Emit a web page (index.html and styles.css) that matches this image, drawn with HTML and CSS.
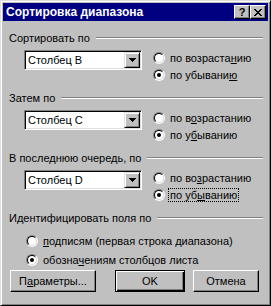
FILE: index.html
```html
<!DOCTYPE html>
<html lang="ru">
<head>
  <meta charset="UTF-8">
  <title>Сортировка диапазона</title>
  <link rel="stylesheet" href="styles.css">
</head>
<body>

  <div class="window">
    <!-- заголовок -->
    <div class="titlebar">
      <span class="title">Сортировка диапазона</span>
      <div class="title-buttons">
        <span class="tbtn">?</span>
        <span class="tbtn">
          <svg width="8" height="7" viewBox="0 0 8 7" shape-rendering="crispEdges"><path d="M0 0h2v1H0zM6 0h2v1H6zM1 1h2v1H1zM5 1h2v1H5zM2 2h4v1H2zM3 3h2v1H3zM2 4h4v1H2zM1 5h2v1H1zM5 5h2v1H5zM0 6h2v1H0zM6 6h2v1H6z" fill="#000"/></svg>
        </span>
      </div>
    </div>

    <div class="content">
      <div class="group">
        <div class="legend"><span>Сортировать по</span><i class="rule"></i></div>
        <div class="group-row">
          <div class="combo">
            <span class="combo-value">Столбец B</span>
            <span class="combo-btn"><svg width="7" height="4" viewBox="0 0 7 4" shape-rendering="crispEdges"><path d="M0 0h7v1H0zM1 1h5v1H1zM2 2h3v1H2zM3 3h1v1H3z" fill="#000"/></svg></span>
          </div>
          <div class="radios">
            <div class="radio"><span class="dot"></span><span>по возраста<u>н</u>ию</span></div>
            <div class="radio checked"><span class="dot"></span><span>по убывани<u>ю</u></span></div>
          </div>
        </div>
      </div>

      <div class="group">
        <div class="legend"><span>Затем по</span><i class="rule"></i></div>
        <div class="group-row">
          <div class="combo">
            <span class="combo-value">Столбец C</span>
            <span class="combo-btn"><svg width="7" height="4" viewBox="0 0 7 4" shape-rendering="crispEdges"><path d="M0 0h7v1H0zM1 1h5v1H1zM2 2h3v1H2zM3 3h1v1H3z" fill="#000"/></svg></span>
          </div>
          <div class="radios">
            <div class="radio"><span class="dot"></span><span>по в<u>о</u>зрастанию</span></div>
            <div class="radio checked"><span class="dot"></span><span>по у<u>б</u>ыванию</span></div>
          </div>
        </div>
      </div>

      <div class="group">
        <div class="legend"><span>В последнюю очередь, по</span><i class="rule"></i></div>
        <div class="group-row">
          <div class="combo">
            <span class="combo-value">Столбец D</span>
            <span class="combo-btn"><svg width="7" height="4" viewBox="0 0 7 4" shape-rendering="crispEdges"><path d="M0 0h7v1H0zM1 1h5v1H1zM2 2h3v1H2zM3 3h1v1H3z" fill="#000"/></svg></span>
          </div>
          <div class="radios">
            <div class="radio"><span class="dot"></span><span>по во<u>з</u>растанию</span></div>
            <div class="radio checked"><span class="dot"></span><span class="focus">по уб<u>ы</u>ванию</span></div>
          </div>
        </div>
      </div>

      <div class="group ident">
        <div class="legend"><span>Идентифицировать поля по</span><i class="rule"></i></div>
        <div class="ident-list">
          <div class="radio"><span class="dot"></span><span><u>п</u>одписям (первая строка диапазона)</span></div>
          <div class="radio checked"><span class="dot"></span><span>обозна<u>ч</u>ениям столбцов листа</span></div>
        </div>
      </div>

      <!-- кнопки -->
      <div class="buttons">
        <button class="btn btn-params">П<u>а</u>раметры...</button>
        <button class="btn btn-ok">OK</button>
        <button class="btn btn-cancel">Отмена</button>
      </div>
    </div>
  </div>

</body>
</html>
```

FILE: styles.css
```css
* {
  margin: 0;
  padding: 0;
  box-sizing: border-box;
}
html, body {
  background: #c0c0c0;
  font-family: "Liberation Sans", Arial, sans-serif;
  font-size: 11px;
  color: #000;
}

.window {
  width: 271px;
  height: 306px;
  padding: 2px;
  background: #c0c0c0;
  border: 1px solid;
  border-color: #dfdfdf #000 #000 #dfdfdf;
  box-shadow: inset 1px 1px #fff, inset -1px -1px #808080;
}

.titlebar {
  height: 18px;
  background: #000080;
  color: #fff;
  display: flex;
  align-items: center;
  justify-content: space-between;
  padding: 0 2px 0 3px;
}

.title {
  font-weight: bold;
  font-size: 12px;
}

.title-buttons {
  display: flex;
}

.tbtn {
  width: 16px;
  height: 14px;
  background: #c0c0c0;
  color: #000;
  font-weight: bold;
  font-size: 11px;
  line-height: 11px;
  display: flex;
  align-items: center;
  justify-content: center;
  border: 1px solid;
  border-color: #fff #000 #000 #fff;
  box-shadow: inset -1px -1px #808080;
}

.content {
  padding: 10px 5px 0 6px;
}

.group {
  margin-bottom: 8px;
}

.legend {
  display: flex;
  align-items: center;
  height: 14px;
}

.rule {
  flex: 1;
  height: 2px;
  margin-left: 6px;
  border-top: 1px solid #808080;
  border-bottom: 1px solid #fff;
}

.group-row {
  display: flex;
  align-items: flex-start;
  margin-top: 4px;
  height: 34px;
}

.combo {
  display: flex;
  width: 118px;
  height: 20px;
  margin: 1px 0 0 15px;
  padding: 1px;
  background: #fff;
  border: 1px solid;
  border-color: #808080 #fff #fff #808080;
  box-shadow: inset 1px 1px #000, inset -1px -1px #dfdfdf;
}

.combo-value {
  flex: 1;
  padding-left: 2px;
  line-height: 16px;
}

.combo-btn {
  width: 16px;
  height: 16px;
  background: #c0c0c0;
  display: flex;
  align-items: center;
  justify-content: center;
  border: 1px solid;
  border-color: #dfdfdf #000 #000 #dfdfdf;
  box-shadow: inset 1px 1px #fff, inset -1px -1px #808080;
}

.radios {
  margin-left: 11px;
}

.radio {
  display: flex;
  align-items: center;
  height: 17px;
  white-space: nowrap;
}

.dot {
  position: relative;
  flex: none;
  width: 12px;
  height: 12px;
  margin-right: 5px;
  border-radius: 50%;
  border: 1px solid;
  border-color: #808080 #fff #fff #808080;
}

.dot::before {
  content: "";
  position: absolute;
  inset: 0;
  border-radius: 50%;
  background: #fff;
  border: 1px solid;
  border-color: #000 #dfdfdf #dfdfdf #000;
}

.checked .dot::after {
  content: "";
  position: absolute;
  left: 3px;
  top: 3px;
  width: 4px;
  height: 4px;
  border-radius: 50%;
  background: #000;
}

.focus {
  margin-left: -1px;
  padding: 0 1px;
  outline: 1px dotted #000;
}

.ident {
  margin-bottom: 0;
}

.ident-list {
  margin-top: 6px;
}

.ident .radio {
  height: 19px;
  padding-left: 17px;
}

.buttons {
  display: flex;
  margin: 1px 0 0 1px;
}

.btn {
  height: 22px;
  background: #c0c0c0;
  font-family: inherit;
  font-size: 11px;
  color: #000;
  border: 1px solid;
  border-color: #fff #000 #000 #fff;
  box-shadow: inset -1px -1px #808080;
}

.btn-params {
  width: 86px;
}

.btn-ok {
  width: 70px;
  margin-left: 19px;
  border-color: #000;
  box-shadow: inset 1px 1px #fff, inset -1px -1px #000, inset -2px -2px #808080;
}

.btn-cancel {
  width: 66px;
  margin-left: 8px;
}
```
